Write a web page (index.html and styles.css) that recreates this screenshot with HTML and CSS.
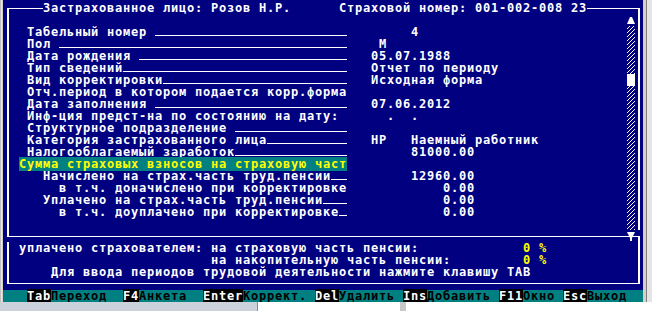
FILE: index.html
```html
<!DOCTYPE html>
<html>
<head>
<meta charset="utf-8">
<title>Застрахованное лицо</title>
<link rel="stylesheet" href="styles.css">
</head>
<body>
<div class="desk">
	<div class="win">
		<div class="edgeL"></div>
		<div class="screen">
			<div class="upper">
				<div class="title">
					<span class="ln lnL"></span>
					<span class="tt">Застрахованное лицо: Розов Н.Р.</span>
					<span class="tgap"></span>
					<span class="tt">Страховой номер: 001-002-008 23</span>
					<span class="ln lnR"></span>
				</div>
				<div class="body">
					<div class="fields">
						<div class="row"></div>
						<div class="row">  Табельный номер <span class="ul">________________________</span>        4</div>
						<div class="row">  Пол <span class="ul">____________________________________</span>    М</div>
						<div class="row">  Дата рождения <span class="ul">__________________________</span>   05.07.1988</div>
						<div class="row">  Тип сведений<span class="ul">____________________________</span>   Отчет по периоду</div>
						<div class="row">  Вид корректировки<span class="ul">_______________________</span>   Исходная форма</div>
						<div class="row">  Отч.период в котором подается корр.форма</div>
						<div class="row">  Дата заполнения <span class="ul">________________________</span>   07.06.2012</div>
						<div class="row">  Инф-ция предст-на по состоянию на дату:      .  .</div>
						<div class="row">  Структурное подразделение <span class="ul">______________</span></div>
						<div class="row">  Категория застрахованного лица<span class="ul">__________</span>   НР   Наемный работник</div>
						<div class="row">  Налогооблагаемый заработок<span class="ul">______________</span>        81000.00</div>
						<div class="row"> <span class="hl">Сумма страховых взносов на страховую част</span></div>
						<div class="row">    Начислено на страх.часть труд.пенсии<span class="ul">__</span>        12960.00</div>
						<div class="row">      в т.ч. доначислено при корректировке            0.00</div>
						<div class="row">    Уплачено на страх.часть труд.пенсии<span class="ul">___</span>            0.00</div>
						<div class="row">      в т.ч. доуплачено при корректировке<span class="ul">_</span>            0.00</div>
						<div class="row"></div>
					</div>
					<div class="scroll">
						<div class="arrow">
							<svg width="8" height="12" viewBox="0 0 8 12"><polygon points="3,3 5,3 8,10 0,10" fill="#fff"/></svg>
						</div>
						<div class="track"></div>
						<div class="thumb"></div>
						<div class="track grow"></div>
					</div>
				</div>
			</div>
			<div class="sep">
				<div class="sepA"></div>
				<div class="sepB"></div>
				<svg class="arrowDown" width="8" height="12" viewBox="0 0 8 12"><polygon points="0,2 8,2 5,8 3,8" fill="#fff"/><rect x="3" y="8" width="2" height="3" fill="#fff"/></svg>
			</div>
			<div class="lower">
				<div class="row"> уплачено страхователем: на страховую часть пенсии:             <span class="yel">0</span> <span class="yel">%</span></div>
				<div class="row">                         на накопительную часть пенсии:         <span class="yel">0</span> <span class="yel">%</span></div>
				<div class="row">     Для ввода периодов трудовой деятельности нажмите клавишу TAB</div>
			</div>
			<div class="status">   <span class="key">Tab</span>Переход  <span class="key">F4</span>Анкета  <span class="key">Enter</span>Коррект. <span class="key">Del</span>Удалить <span class="key">Ins</span>Добавить <span class="key">F11</span>Окно <span class="key">Esc</span>Выход</div>
		</div>
		<div class="edgeR"></div>
	</div>
	<div class="taskbar">
		<div class="tbA"></div>
		<div class="tbB"></div>
		<div class="tbC"></div>
	</div>
</div>
</body>
</html>
```

FILE: styles.css
```css
* {
	box-sizing: border-box;
}

body {
	margin: 0;
	background: #d4d0c8;
}

.desk {
	width: 652px;
	height: 311px;
	overflow: hidden;
}

.win {
	display: flex;
	height: 302px;
}

.edgeL {
	width: 3px;
	background: linear-gradient(to right, #c0c0c0 0 1px, #e8e8e8 1px 2px, #d4d0c8 2px);
}

.edgeR {
	width: 9px;
	background: linear-gradient(to right, #d4d0c8 0 3px, #808080 3px 4px, #e4e4e4 4px);
}

/* text mode screen: 80 x 25 cells of 8 x 12 */
.screen {
	width: 640px;
	padding-top: 2px;
	display: flex;
	flex-direction: column;
	background: #000080;
	color: #fff;
	font: bold 12px/12px "DejaVu Sans Mono", monospace;
	letter-spacing: 0.7754px;
}

.row {
	height: 12px;
	white-space: pre;
}

/* input blanks: drawn as one solid rule like the DOS font does */
.ul {
	color: transparent;
	background: linear-gradient(#fff, #fff) no-repeat 0 10px / 100% 1px;
}

.hl {
	background: #008080;
	color: #ffff00;
}

.yel {
	color: #ffff00;
}

/* upper frame */
.upper {
	display: flex;
	flex-direction: column;
	margin: 6px 0 0 4px;
	width: 633px;
	border-left: 2px solid #fff;
	border-right: 2px solid #fff;
}

.title {
	display: flex;
	align-items: flex-start;
	height: 12px;
	margin: -6px -2px 0;
}

.ln {
	margin-top: 6px;
	border-top: 1px solid #fff;
}

.lnL {
	width: 36px;
}

.lnR {
	flex: 1;
}

.tt {
	width: 248px;
	white-space: pre;
}

.tgap {
	width: 48px;
}

.body {
	display: flex;
	height: 216px;
}

.fields {
	flex: 1;
	padding-left: 2px;
}

.scroll {
	display: flex;
	flex-direction: column;
	width: 8px;
	margin-right: 3px;
}

.arrow {
	height: 12px;
}

.arrow svg,
.arrowDown {
	display: block;
}

.track {
	height: 48px;
	background: repeating-linear-gradient(-45deg, #fff 0 1.3px, #000080 1.3px 2.83px);
}

.track.grow {
	height: auto;
	flex: 1;
}

.thumb {
	height: 12px;
	background: #fff;
}

/* joint between the two frames */
.sep {
	position: relative;
	margin-left: 4px;
	width: 633px;
	height: 12px;
}

.sepA {
	height: 7px;
	border-left: 2px solid #fff;
	border-bottom: 1px solid #fff;
}

.sepB {
	height: 5px;
	border-right: 2px solid #fff;
}

.arrowDown {
	position: absolute;
	left: 620px;
	top: 0;
}

.lower {
	margin-left: 4px;
	width: 633px;
	height: 42px;
	padding-left: 2px;
	border-left: 2px solid #fff;
	border-right: 2px solid #fff;
	border-bottom: 1px solid #fff;
}

.status {
	margin-top: auto;
	height: 12px;
	background: #008080;
	color: #000;
	white-space: pre;
}

.key {
	background: #000;
	color: #fff;
}

.taskbar {
	display: flex;
	height: 9px;
}

.tbA {
	width: 258px;
	background: #cbd2dc;
	border-right: 1px solid #8a8a8a;
}

.tbB {
	width: 142px;
	background: #fff;
}

.tbC {
	flex: 1;
	background: linear-gradient(to right, #c8c8c8 0 6px, #fff 6px);
}
```
